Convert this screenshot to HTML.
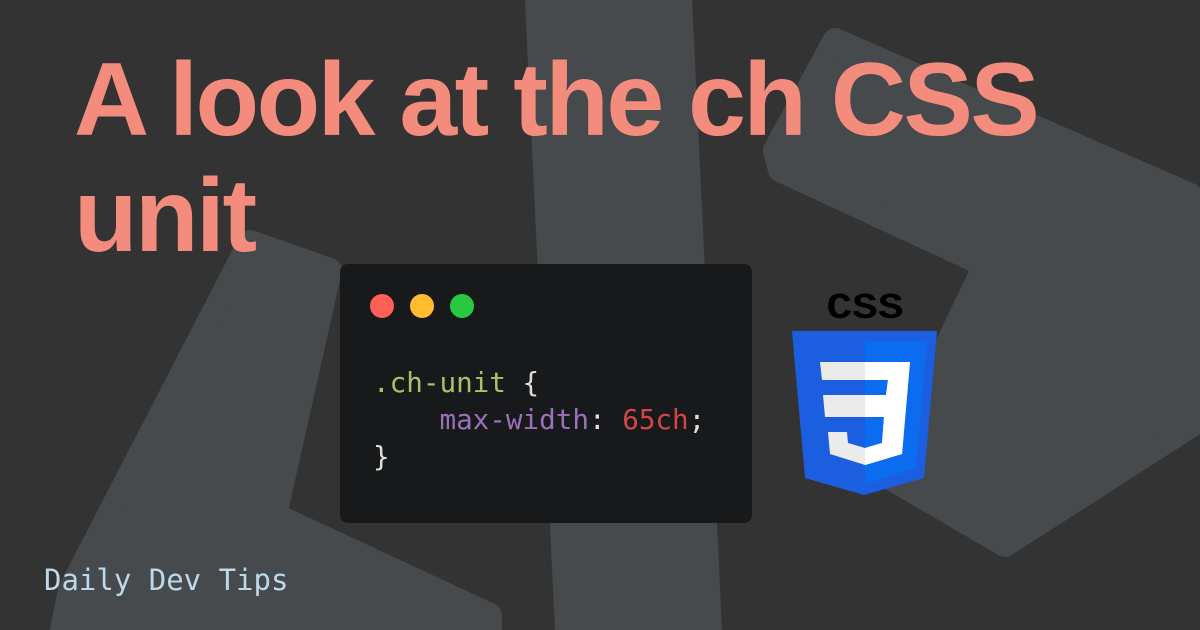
<!DOCTYPE html>
<html><head><style>
body{margin:0;width:1200px;height:630px;overflow:hidden;background:#333333;position:relative;font-family:"Liberation Sans",sans-serif}
svg.bg{position:absolute;left:0;top:0}
h1{position:absolute;left:74px;top:42px;margin:0;font-size:104px;line-height:116px;letter-spacing:-2.5px;color:#f48c7d;font-weight:bold;width:1100px}
.win{position:absolute;left:340px;top:264px;width:412px;height:259px;background:#18191b;border-radius:8px}
.dot{position:absolute;top:30px;width:24px;height:24px;border-radius:50%}
pre{position:absolute;left:33px;top:100px;margin:0;font-family:"DejaVu Sans Mono","Liberation Mono",monospace;font-size:27.6px;line-height:37px;color:#ddd}
.g{color:#a6c26a}.p{color:#9b70b8}.r{color:#d0464a}
.foot{position:absolute;left:44px;top:563px;font-family:"DejaVu Sans Mono","Liberation Mono",monospace;font-size:29px;color:#bcd8ea}
</style></head><body>
<svg class="bg" width="1200" height="630">
<g fill="#464a4c" stroke="#464a4c" stroke-width="24" stroke-linejoin="round">
<polygon points="537,0 680,0 710,630 567,630"/>
<polygon points="835,40 1190,195 1200,420 1005,545 885,475 985,265 780,170 775,150"/>
<polygon points="250,242 330,270 275,515 490,615 490,640 60,640 70,590"/>
</g>
</svg>
<h1>A look at the ch CSS unit</h1>
<div class="win">
<div class="dot" style="left:30px;background:#fe5f57"></div>
<div class="dot" style="left:70px;background:#febc2e"></div>
<div class="dot" style="left:110px;background:#28c840"></div>
<pre><span class="g">.ch-unit</span> {
    <span class="p">max-width</span>: <span class="r">65ch</span>;
}</pre>
</div>
<svg style="position:absolute;left:790px;top:288px" width="150" height="210">
<text x="75" y="30" text-anchor="middle" font-family="Liberation Mono,monospace" font-weight="bold" font-size="36" fill="#000" textLength="77" lengthAdjust="spacingAndGlyphs">CSS</text>
<polygon points="2,43 147,43 134,190 74,207 15,190" fill="#1b5ee0"/>
<polygon points="75,53 137,53 126,180 75,197" fill="#0b6cf0"/>
<polygon points="30,74 120,74 112,166 75,177 40,166 38,144 57,144 58,155 75,160 92,155 94,129 35,129 33,107 96,107 98,92 32,92" fill="#ebebeb"/>
<polygon points="75,74 120,74 112,166 75,177 75,160 92,155 94,129 75,129 75,107 96,107 98,92 75,92" fill="#fff"/>
</svg>
<div class="foot">Daily Dev Tips</div>
</body></html>
